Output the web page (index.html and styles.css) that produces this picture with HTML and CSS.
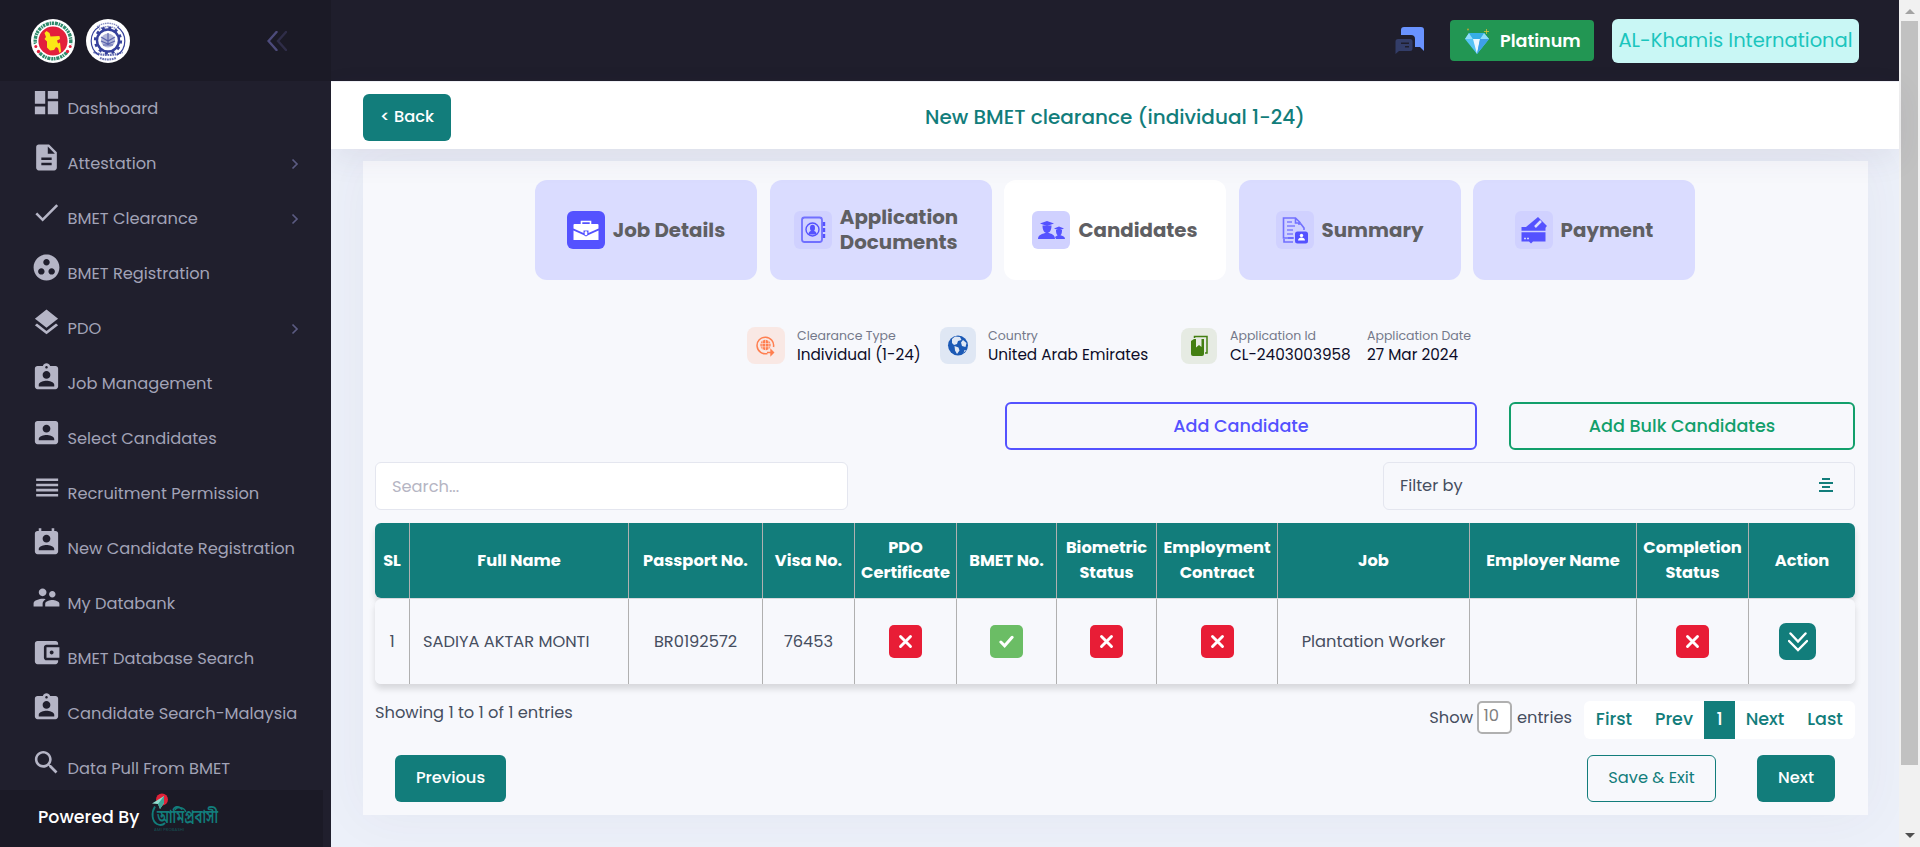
FILE: index.html
```html
<!DOCTYPE html>
<html lang="en">
<head>
<meta charset="utf-8">
<title>New BMET clearance</title>
<link rel="stylesheet" href="styles.css">
</head>
<body>
<svg width="0" height="0" class="defs">
  <symbol id="badge-id" viewBox="0 0 24 24"><path fill-rule="evenodd" d="M19 3h-4.180C14.400 1.840 13.300 1 12 1s-2.400.84-2.820 2H5c-1.100 0-2 .9-2 2v14c0 1.100.9 2 2 2h14c1.100 0 2-.9 2-2V5c0-1.100-.9-2-2-2zm-7 0c.55 0 1 .45 1 1s-.45 1-1 1-1-.45-1-1 .45-1 1-1zm0 4c1.660 0 3 1.340 3 3s-1.340 3-3 3-3-1.340-3-3 1.340-3 3-3zm6 12H6v-1.400c0-2 4-3.100 6-3.100s6 1.100 6 3.100V19z"/></symbol>
  <symbol id="cross" viewBox="0 0 12 12"><path d="M2 2l8 8M10 2l-8 8" stroke="#fff" stroke-width="2.300" stroke-linecap="round"/></symbol>
  <symbol id="chev" viewBox="0 0 8 12"><path d="M1.500 1.500L6 6l-4.500 4.500" fill="none" stroke="#5b5b82" stroke-width="1.700"/></symbol>
</svg>
<div class="app">
  <aside class="sidebar">
    <div class="brand">
      <svg class="emblem" viewBox="0 0 44 44"><circle cx="22" cy="22" r="22" fill="#fff"/><circle cx="22" cy="22" r="17.800" fill="none" stroke="#2e8b6c" stroke-width="3.400" stroke-dasharray="2.200 .9 3.100 .8 1.500 .7" pathLength="112"/><path d="M4 25l5 8M40 25l-5 8" stroke="#fff" stroke-width="8"/><g fill="#e3203c"><circle cx="22" cy="22" r="14.600"/><circle cx="4.800" cy="27.500" r="1.500"/><circle cx="7.500" cy="32.500" r="1.700"/><circle cx="39.200" cy="27.500" r="1.500"/><circle cx="36.500" cy="32.500" r="1.700"/></g><path fill="#fbe816" d="M13.500 14l2-2 3 2 1 3.500 9-.5.5 3-3 1.500 1 3 2-1 1 9-1.500 1.500-1.500-5-2-1-2 3-4 .5-3-3 0-6-2.500-2.500 1.500-2z"/></svg>
      <svg class="emblem" viewBox="0 0 44 44"><circle cx="22" cy="22" r="22" fill="#fff"/><g fill="none" stroke="#36419b"><circle cx="22" cy="21.500" r="11" stroke-width="2.400"/><circle cx="22" cy="21.500" r="12.800" stroke-width="2.600" stroke-dasharray="3 3.700"/><circle cx="22" cy="22" r="16.800" stroke-width="1.200" stroke-dasharray="34 18.800" stroke-dashoffset="17"/><path d="M11 8a18 18 0 0 1 22 0M13 10.500a15 15 0 0 1 18 0" stroke-width="1.300" stroke-dasharray="1.500 .7" opacity=".6"/><path d="M7.500 33c8 4 21 4 29 0M14 39c5 2 11 2 16 0" stroke-width="2.200" stroke-dasharray="1.700 .7" opacity=".75"/><path d="M15 18l7 4 7-4M15 22l7 3 7-3M17 26h10M22 14v12" stroke-width="1.200" opacity=".7"/></g><circle cx="22" cy="21.500" r="7" fill="#36419b" opacity=".38"/></svg>
      <svg class="collapse" viewBox="0 0 20 20"><path d="M9.500 1L1.500 10l8 9" fill="none" stroke="#4d4b7b" stroke-width="2.400" stroke-linecap="round"/><path d="M19 1l-8 9 8 9" fill="none" stroke="#2f2d48" stroke-width="2.400" stroke-linecap="round"/></svg>
    </div>
    <nav class="menu">
      <a><svg viewBox="0 0 24 24"><path d="M3 13h8V3H3v10zm0 8h8v-6H3v6zm10 0h8V11h-8v10zm0-18v6h8V3h-8z"/></svg><span>Dashboard</span></a>
      <a><svg viewBox="0 0 24 24"><path d="M14 2H6c-1.100 0-1.990.9-1.990 2L4 20c0 1.100.89 2 1.990 2H18c1.100 0 2-.9 2-2V8l-6-6zm2 16H8v-2h8v2zm0-4H8v-2h8v2zm-3-5V3.500L18.500 9H13z"/></svg><span>Attestation</span><svg class="go"><use href="#chev"/></svg></a>
      <a><svg viewBox="0 0 24 24"><path d="M9 16.170L4.830 12l-1.420 1.410L9 19 21 7l-1.410-1.410z"/></svg><span>BMET Clearance</span><svg class="go"><use href="#chev"/></svg></a>
      <a><svg viewBox="0 0 24 24"><path d="M12 2C6.480 2 2 6.480 2 12s4.480 10 10 10 10-4.480 10-10S17.520 2 12 2zM8 17.500c-1.380 0-2.500-1.120-2.500-2.500s1.120-2.500 2.500-2.500 2.500 1.120 2.500 2.500-1.120 2.500-2.500 2.500zM9.500 8c0-1.380 1.120-2.500 2.500-2.500s2.500 1.120 2.500 2.500-1.120 2.500-2.500 2.500S9.500 9.380 9.500 8zm6.500 9.500c-1.380 0-2.500-1.120-2.500-2.500s1.120-2.500 2.500-2.500 2.500 1.120 2.500 2.500-1.120 2.500-2.500 2.500z"/></svg><span>BMET Registration</span></a>
      <a><svg viewBox="0 0 24 24"><path d="M11.990 18.540l-7.370-5.730L3 14.070l9 7 9-7-1.630-1.270-7.380 5.740zM12 16l7.360-5.730L21 9l-9-7-9 7 1.630 1.270L12 16z"/></svg><span>PDO</span><svg class="go"><use href="#chev"/></svg></a>
      <a><svg><use href="#badge-id"/></svg><span>Job Management</span></a>
      <a><svg viewBox="0 0 24 24"><path d="M3 5v14c0 1.100.89 2 2 2h14c1.100 0 2-.9 2-2V5c0-1.100-.9-2-2-2H5c-1.110 0-2 .9-2 2zm12 4c0 1.660-1.340 3-3 3s-3-1.340-3-3 1.340-3 3-3 3 1.340 3 3zm-9 8c0-2 4-3.100 6-3.100s6 1.100 6 3.100v1H6v-1z"/></svg><span>Select Candidates</span></a>
      <a><svg viewBox="0 0 24 24"><path d="M4 15h17v-2H4v2zm0 4h17v-2H4v2zm0-8h17V9H4v2zm0-6v2h17V5H4z"/></svg><span>Recruitment Permission</span></a>
      <a><svg viewBox="0 0 24 24"><path d="M19 3h-1V1h-2v2H8V1H6v2H5c-1.110 0-2 .9-2 2v14c0 1.100.89 2 2 2h14c1.100 0 2-.9 2-2V5c0-1.100-.9-2-2-2zm-7 3c1.660 0 3 1.340 3 3s-1.340 3-3 3-3-1.340-3-3 1.340-3 3-3zm6 12H6v-1c0-2 4-3.100 6-3.100s6 1.100 6 3.100v1z"/></svg><span>New Candidate Registration</span></a>
      <a><svg viewBox="0 0 24 24"><path d="M16.500 12c1.380 0 2.490-1.120 2.490-2.500S17.880 7 16.500 7C15.120 7 14 8.120 14 9.500s1.120 2.500 2.500 2.500zM9 11c1.660 0 2.990-1.340 2.990-3S10.660 5 9 5C7.340 5 6 6.340 6 8s1.340 3 3 3zm7.500 3c-1.830 0-5.500.92-5.500 2.750V19h11v-2.250c0-1.830-3.670-2.750-5.500-2.750zM9 13c-2.330 0-7 1.170-7 3.500V19h7v-2.250c0-.85.33-2.340 2.370-3.470C10.500 13.100 9.660 13 9 13z"/></svg><span>My Databank</span></a>
      <a><svg viewBox="0 0 24 24"><path d="M21 18v1c0 1.100-.9 2-2 2H5c-1.110 0-2-.9-2-2V5c0-1.100.89-2 2-2h14c1.100 0 2 .9 2 2v1h-9c-1.110 0-2 .9-2 2v8c0 1.100.89 2 2 2h9zm-9-2h10V8H12v8zm4-2.500c-.83 0-1.500-.67-1.500-1.500s.67-1.500 1.500-1.500 1.500.67 1.500 1.500-.67 1.500-1.500 1.500z"/></svg><span>BMET Database Search</span></a>
      <a><svg><use href="#badge-id"/></svg><span>Candidate Search-Malaysia</span></a>
      <a><svg viewBox="0 0 24 24"><path d="M15.500 14h-.79l-.28-.27C15.410 12.590 16 11.110 16 9.500 16 5.910 13.090 3 9.500 3S3 5.910 3 9.500 5.910 16 9.500 16c1.610 0 3.090-.59 4.230-1.570l.27.28v.79l5 4.990L20.490 19l-4.990-5zm-6 0C7.010 14 5 11.990 5 9.500S7.010 5 9.500 5 14 7.010 14 9.500 11.990 14 9.500 14z"/></svg><span>Data Pull From BMET</span></a>
    </nav>
    <div class="powered">
      <span>Powered By</span>
      <svg class="ami" viewBox="0 0 68 38"><circle cx="10" cy="6.500" r="6" fill="#df2238"/><path d="M0 10.500L12 3v7l-4 6-2-5z" fill="#8fdccd"/><path d="M12 3L6 11l2 5 4-6z" fill="#3fa596"/><path d="M3 13.500C-1 20 0 28 5 31c3 1.500 6 1 8-1" fill="none" stroke="#127d7b" stroke-width="1.800"/><path d="M23 17c2-4 9-3 11 2" fill="none" stroke="#127d7b" stroke-width="1.300"/><text x="5" y="30" class="bn" textLength="61" lengthAdjust="spacingAndGlyphs">আমিপ্রবাসী</text><text x="2" y="37.500" class="bn-sub" textLength="30">AMI PROBASHI</text></svg>
    </div>
  </aside>

  <main class="main">
    <header class="topbar">
      <svg class="chat" viewBox="0 0 29 27"><path d="M9 0h17a3 3 0 0 1 3 3v21l-4-4h-5v-8a4 4 0 0 0-4-4H6V3a3 3 0 0 1 3-3z" fill="#6993ff"/><path fill-rule="evenodd" d="M3 12h12a2.500 2.500 0 0 1 2.500 2.500v7A2.500 2.500 0 0 1 15 24H4l-3.500 3V14.500A2.500 2.500 0 0 1 3 12zm3 3.600v1.400h8v-1.400zm4 3.500v1.400h4v-1.400z" fill="#333d68"/></svg>
      <div class="plan"><svg viewBox="0 0 26 26"><path d="M5 5h15l5 6-12 15L1 11z" fill="#55c3f5"/><path d="M5 5l4 6H1zM20 5l-4 6h9z" fill="#8fdcfb"/><path d="M5 5h15l-4 6H9z" fill="#36aee6"/><path d="M9 11h7l-3 15z" fill="#eaf7ff"/><path d="M16 11h9L13 26z" fill="#3f9fe8"/><path d="M22.500 1v5M20 3.500h5" stroke="#d4c23a" stroke-width=".8"/><circle cx="4" cy="1.500" r=".9" fill="#bfa838"/></svg><span>Platinum</span></div>
      <div class="agency"><span>AL-Khamis International</span></div>
    </header>
    <div class="subbar">
      <button class="btn back">&lt; Back</button>
      <h1>New BMET clearance (individual 1-24)</h1>
    </div>
    <div class="page">
      <section class="card">
        <div class="steps">
          <div class="step"><svg class="tile solid" viewBox="0 0 38 38"><path d="M7.500 13h23a1 1 0 0 1 1 1v3.500L21.500 22v-2.500h-5V22L6.500 17.500V14a1 1 0 0 1 1-1z" fill="#fff"/><path d="M6.500 19.500l10 4.500 2.500 1.500 2.500-1.500 10-4.500V29h-25z" fill="#fff"/><path d="M14.500 13v-2.500h9V13" fill="none" stroke="#fff" stroke-width="1.600"/><rect x="17.700" y="20.300" width="2.600" height="4" rx="1.200" fill="#fff"/></svg><span>Job Details</span></div>
          <div class="step docs"><svg class="tile" viewBox="0 0 38 38"><rect x="8" y="6.500" width="20" height="24.500" rx="2.500" fill="none" stroke="#7170ff" stroke-width="1.800"/><ellipse cx="18.500" cy="18.500" rx="6.500" ry="6.500" fill="none" stroke="#5452ff" stroke-width="1.400"/><ellipse cx="18.500" cy="17" rx="2.500" ry="3.200" fill="#5452ff"/><path d="M14.500 23.500c0-3 2-4 4-4s4 1 4 4z" fill="#5452ff"/><path d="M30 11v4M30 17v4M30 23v4" stroke="#5452ff" stroke-width="2.400"/></svg><span>Application<br>Documents</span></div>
          <div class="step active"><svg class="tile" viewBox="0 0 38 38"><g fill="#5452ff"><path d="M8 12.500l7-2.500 7 2.500-7 2.500z"/><path d="M10.500 14.500h9c0 5-2 7.500-4.500 7.500s-4.500-2.500-4.500-7.500zM6 28c0-4 4-5 7-6h4c3 1 6 2 6 6zM22 17.500l5-2 5 2-5 2z"/><path d="M24 19h6c0 4-1 5.500-3 5.500s-3-1.500-3-5.500zM24 28l-1-2 3-2h2c3 1 5 1.500 5 4z"/></g></svg><span>Candidates</span></div>
          <div class="step"><svg class="tile" viewBox="0 0 38 38"><path d="M18 27H7.500V7h12l5 5M19.500 7v5h5M8 28v3h9M22 13h3l3 4v2" fill="none" stroke="#7170ff" stroke-width="1.600"/><path d="M11 11h5M11 15h8M11 19h6M11 23h6M12 27h5" stroke="#5452ff" stroke-width="1.200"/><rect x="19" y="20.500" width="13" height="12" rx="2.500" fill="#5452ff"/><circle cx="25.500" cy="24.500" r="1.700" fill="#fff"/><path d="M22 29.500c0-4 7-4 7 0z" fill="#fff"/></svg><span>Summary</span></div>
          <div class="step"><svg class="tile" viewBox="0 0 38 38"><g fill="#5452ff"><path d="M11 16L23 6l9 9-3 3z"/><path d="M6.500 16h24v14.500H18l-2 2-2-2H6.500z"/></g><path d="M20 16l6-6" stroke="#dadcff" stroke-width="2.500"/><path d="M6 20.500h25" stroke="#cfd1ff" stroke-width="1.300"/><path d="M9 27.500h5" stroke="#cfd1ff" stroke-width="1.500" stroke-dasharray="2 1"/></svg><span>Payment</span></div>
        </div>

        <div class="facts">
          <div class="fact f1"><svg class="ico orange" viewBox="0 0 38 37"><path d="M26.500 20a8.300 8.300 0 1 0-6 6.500" fill="none" stroke="#ff7f50" stroke-width="1.500"/><circle cx="18.500" cy="18" r="5.200" fill="#ff7f50"/><path d="M13 16.500h11M13 19.800h11M18.500 12v12M16 13c-1.200 3-1.200 7 0 10M21 13c1.200 3 1.200 7 0 10" stroke="#f9e8e4" stroke-width=".6" fill="none"/><path d="M20 25.500h4M24 23l2.500 2.500L24 28z" stroke="#ff7f50" stroke-width="1.400" fill="#ff7f50"/></svg><div><small>Clearance Type</small><b>Individual (1-24)</b></div></div>
          <div class="fact f2"><svg class="ico blue" viewBox="0 0 36 37"><circle cx="18" cy="18.500" r="10" fill="#1b59b5"/><path d="M12 12l3-2.500 5 .5 1.500 3-3.500 1-1 3-3 1-2-2zM14.500 19l4 1.500 1 3-2.500 3.500-2-3.500zM23 13l3.500 3-1 4-3.500-1-1-3.500zM24.500 23l1.500 0-2.500 3z" fill="#dfe7f4"/></svg><div><small>Country</small><b>United Arab Emirates</b></div></div>
          <div class="fact f3"><svg class="ico green" viewBox="0 0 36 36"><path d="M13.500 10V8.500H26V25h-2" fill="none" stroke="#437f12" stroke-width="1.500"/><path d="M10 13l3-2h10v15a2 2 0 0 1-2 2H12a2 2 0 0 1-2-2z" fill="#437f12"/><path d="M15 10h5.500v9L18 17l-3 2.500z" fill="#e6ebe3"/></svg><div><small>Application Id</small><b>CL-2403003958</b></div></div>
          <div class="fact f4"><div><small>Application Date</small><b>27 Mar 2024</b></div></div>
        </div>

        <div class="adders">
          <button class="outline indigo">Add Candidate</button>
          <button class="outline emerald">Add Bulk Candidates</button>
        </div>

        <div class="filters">
          <div class="search">Search...</div>
          <div class="filter"><span>Filter by</span><svg viewBox="0 0 14 14"><path d="M3 1h8M0 5h14M3 9h8M0 13h14" stroke="#127d7b" stroke-width="1.800"/></svg></div>
        </div>

        <table>
          <colgroup><col class="c-sl"><col class="c-name"><col class="c-pass"><col class="c-visa"><col class="c-pdo"><col class="c-bmet"><col class="c-bio"><col class="c-emp"><col class="c-job"><col class="c-boss"><col class="c-done"><col></colgroup>
          <thead><tr><th>SL</th><th>Full Name</th><th>Passport No.</th><th>Visa No.</th><th>PDO<br>Certificate</th><th>BMET No.</th><th>Biometric<br>Status</th><th>Employment<br>Contract</th><th>Job</th><th>Employer Name</th><th>Completion<br>Status</th><th>Action</th></tr></thead>
          <tbody><tr>
            <td>1</td><td class="left">SADIYA AKTAR MONTI</td><td>BR0192572</td><td>76453</td>
            <td><i class="mark no"><svg><use href="#cross"/></svg></i></td>
            <td><i class="mark yes"><svg class="tick" viewBox="0 0 16 13"><path d="M2 7l4 4 8-9" fill="none" stroke="#fff" stroke-width="3.200" stroke-linecap="round"/></svg></i></td>
            <td><i class="mark no"><svg><use href="#cross"/></svg></i></td>
            <td><i class="mark no"><svg><use href="#cross"/></svg></i></td>
            <td>Plantation Worker</td><td></td>
            <td><i class="mark no"><svg><use href="#cross"/></svg></i></td>
            <td><i class="mark more"><svg class="down" viewBox="0 0 20 20"><path d="M2.500 1.500l7.500 8 7.500-8M1 9l9 9 9-9" fill="none" stroke="#fff" stroke-width="2.400" stroke-linecap="round"/></svg></i></td>
          </tr></tbody>
        </table>

        <div class="foot">
          <p>Showing 1 to 1 of 1 entries</p>
          <div class="show"><span>Show</span><span class="count">10</span><span>entries</span></div>
          <div class="pager"><a>First</a><a>Prev</a><a class="on">1</a><a>Next</a><a>Last</a></div>
        </div>
        <div class="actions">
          <button class="btn prev">Previous</button>
          <button class="btn save">Save &amp; Exit</button>
          <button class="btn next">Next</button>
        </div>
      </section>
    </div>
  </main>
  <div class="scroll"><i class="up"></i><i class="thumb"></i><i class="dn"></i></div>
</div>
</body>
</html>
```
FILE: styles.css
```css
* { box-sizing: border-box; }
body { margin: 0; font-family: Poppins, Inter, "Open Sans", sans-serif; font-size: 16.25px; color: #464e5f; background: #ecf0f9; overflow: hidden; }
button { font: inherit; padding: 0; margin: 0; }
.defs { position: absolute; }
.app { display: grid; grid-template-columns: 331px 1fr 21px; height: 847px; }

.sidebar { background: #201f2d; display: flex; flex-direction: column; min-height: 0; z-index: 2; }
.brand { height: 81px; flex: none; background: #1b1a26; display: flex; align-items: center; gap: 11px; padding-left: 31px; }
.emblem { width: 44px; height: 44px; }
.collapse { width: 20px; height: 20px; margin-left: 126px; }
.menu { flex: 1; min-height: 0; overflow: hidden; }
.menu a { height: 55px; display: flex; align-items: center; padding: 0 32px 0 31px; color: #a2a3b7; }
.menu a > svg:first-child { flex: none; width: 31px; height: 31px; margin: 0 5.5px 12px 0; fill: #b5b5c6; }
.menu span { flex: 1; white-space: nowrap; }
.menu .go { width: 8px; height: 12px; flex: none; }
.powered { flex: none; height: 57px; width: 323px; background: #1b1a26; display: flex; color: #fff; padding: 3px 0 0 38px; }
.powered span { width: 114px; padding-top: 11px; font-size: 17.4px; font-weight: 500; white-space: nowrap; }
.ami { width: 68px; height: 38px; overflow: visible; }
.bn { font-family: "Noto Sans Bengali", "Noto Sans", sans-serif; font-size: 19px; font-weight: 600; fill: #127d7b; }
.bn-sub { font-size: 4px; fill: #127d7b; opacity: .6; }

.main { display: flex; flex-direction: column; min-width: 0; }
.topbar { height: 81px; flex: none; background: #1f1e2c; display: flex; align-items: center; justify-content: flex-end; padding-right: 40px; }
.chat { width: 29px; height: 27px; margin-right: 26px; }
.plan { width: 144px; height: 41px; border-radius: 4px; background: #229653; color: #fff; display: flex; align-items: center; gap: 10px; padding-left: 14px; font-weight: 600; font-size: 17.55px; margin-right: 18px; }
.plan svg { width: 26px; height: 26px; }
.agency { width: 247px; height: 44px; border-radius: 6px; background: #c9f7f5; color: #1bc5bd; display: flex; align-items: center; justify-content: center; font-size: 19.5px; white-space: nowrap; }
.subbar { height: 68px; flex: none; background: #fff; border-top: 1px solid #eff0f6; display: grid; grid-template-columns: 88px 1fr 88px; align-items: start; padding: 12px 32px 0; z-index: 1; box-shadow: 0 10px 30px rgba(82, 63, 105, .08); }
.subbar h1 { margin: 7px 0 0; font-size: 20px; line-height: 32px; font-weight: 500; color: #127d7b; text-align: center; }
.btn { height: 47px; border: 0; border-radius: 6px; background: #127d7b; color: #fff; text-align: center; font-weight: 500; padding-bottom: 2px; }

.page { flex: 1; padding: 12px 31px 0 32px; min-height: 0; }
.card { height: 654px; background: #f7f8fc; box-shadow: 0 0 50px rgba(82, 63, 105, .05); padding: 19px 13px 0 12px; }
.steps { display: grid; grid-template-columns: repeat(5, 222px); gap: 12.5px; padding-left: 160px; }
.step { height: 100px; border-radius: 12px; background: #dadcff; display: flex; align-items: center; justify-content: center; gap: 8px; font-weight: 700; font-size: 19.8px; line-height: 25px; color: #5f5f63; }
.step.docs { padding-right: 9px; }
.step.active { background: #fff; }
.tile { width: 38px; height: 38px; border-radius: 6px; background: #d0d1ff; }
.tile.solid { background: #5452ff; }
.facts { display: grid; grid-template-columns: 193px 241px 186px 1fr; padding-left: 372px; margin-top: 46px; height: 76px; }
.fact { display: flex; gap: 13px; align-items: flex-start; }
.ico { width: 38px; height: 37px; border-radius: 8px; margin-top: 1px; margin-right: -1px; }
.f2 .ico, .f3 .ico { width: 36px; margin-right: -1px; }
.f3 .ico { height: 36px; margin-top: 2px; margin-right: 0; }
.orange { background: #f9e8e4; } .blue { background: #dfe7f4; } .green { background: #e6ebe3; }
.fact small, .fact b { display: block; font-weight: 400; white-space: nowrap; line-height: 19px; }
.fact small { font-size: 12.5px; color: #74788a; }
.fact b { font-size: 15.275px; color: #0c0c28; }

.adders { display: grid; grid-template-columns: 472px 346px; gap: 32px; padding-left: 630px; }
.outline { height: 48px; border-radius: 6px; background: transparent; border: 2px solid; font-size: 17.6px; font-weight: 500; }
.indigo { color: #5452ff; } .emerald { color: #129f6b; }
.filters { display: flex; justify-content: space-between; margin: 12px 0; }
.search, .filter { height: 48px; border: 1px solid #e4e6ef; border-radius: 6px; display: flex; align-items: center; padding: 0 21px 0 16px; }
.search { width: 473px; background: #fff; color: #b5b5c3; }
.filter { width: 472px; justify-content: space-between; padding-bottom: 2px; }
.filter svg { width: 14px; height: 14px; }

table { width: 1480px; table-layout: fixed; border-collapse: separate; border-spacing: 0 1px; }
.c-sl { width: 35px; } .c-name { width: 219px; } .c-pass { width: 134px; } .c-visa { width: 92px; } .c-pdo { width: 102px; } .c-bmet { width: 100px; } .c-bio { width: 100px; } .c-emp { width: 121px; } .c-job { width: 192px; } .c-boss { width: 167px; } .c-done { width: 112px; }
tr { border-radius: 6px; box-shadow: 0 5px 6px rgba(0, 0, 0, .13); }
th, td { padding: 0; text-align: center; border-right: 1px solid #b0b0b0; white-space: nowrap; }
th { height: 75px; padding-bottom: 1px; background: #127d7b; color: #fff; font-weight: 700; line-height: 25px; }
td { height: 85px; background: #f7f8fc; }
th:first-child, td:first-child { border-radius: 6px 0 0 6px; }
th:last-child, td:last-child { border-radius: 0 6px 6px 0; border-right: 0; }
td.left { text-align: left; padding-left: 13px; }
.mark { display: inline-flex; width: 33px; height: 33px; border-radius: 5px; align-items: center; justify-content: center; vertical-align: middle; }
.mark svg { width: 15px; height: 15px; }
.no { background: #e81d36; } .yes { background: #6bbd65; }
.more { background: #127d7b; width: 37px; height: 37px; border-radius: 7px; margin-right: 9px; }
.mark .down { width: 20px; height: 20px; }

.foot { display: flex; height: 55px; padding-top: 16px; align-items: flex-start; }
.foot p { margin: 2px auto 0 0; line-height: 20px; }
.show { display: flex; align-items: center; gap: 4.5px; height: 33px; margin-right: 12px; }
.count { width: 35px; height: 33px; line-height: 24px; border: 2px solid #b0b0b0; border-radius: 5px; background: #fff; color: #808080; padding: 1px 0 0 4px; }
.pager { display: flex; width: 271px; height: 38px; border-radius: 6px; background: #fff; color: #127d7b; font-size: 17.55px; font-weight: 500; line-height: 37px; text-align: center; }
.pager a { width: 60px; }
.pager a.on { width: 31px; background: #127d7b; color: #fff; }
.actions { display: flex; padding: 15px 20px 0; }
.prev { width: 111px; margin-right: auto; }
.save { width: 129px; margin-right: 41px; background: transparent; color: #127d7b; border: 1px solid #127d7b; font-weight: 400; }
.next { width: 78px; }

.scroll { background: #f1f1f1; display: flex; flex-direction: column; align-items: center; }
.scroll .up { border: 5px solid transparent; border-top: 0; border-bottom-color: #a3a3a3; margin: 9px 0 7px; }
.scroll .thumb { width: 17px; height: 744px; background: #c1c1c1; }
.scroll .dn { border: 5px solid transparent; border-bottom: 0; border-top-color: #505050; margin-top: 68px; }
```
